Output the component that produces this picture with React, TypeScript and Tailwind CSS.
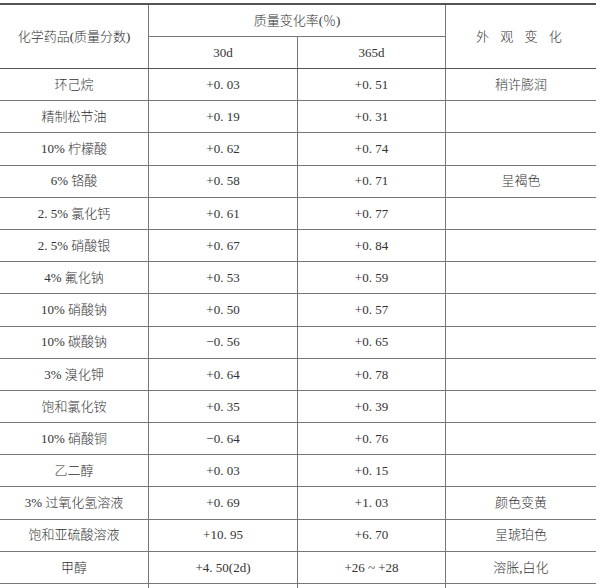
import React from 'react';

type Row = {
  name: string;
  d30: string;
  d365: string;
  change?: string;
};

const rows: Row[] = [
  { name: '环己烷', d30: '+0. 03', d365: '+0. 51', change: '稍许膨润' },
  { name: '精制松节油', d30: '+0. 19', d365: '+0. 31' },
  { name: '10% 柠檬酸', d30: '+0. 62', d365: '+0. 74' },
  { name: '6% 铬酸', d30: '+0. 58', d365: '+0. 71', change: '呈褐色' },
  { name: '2. 5% 氯化钙', d30: '+0. 61', d365: '+0. 77' },
  { name: '2. 5% 硝酸银', d30: '+0. 67', d365: '+0. 84' },
  { name: '4% 氟化钠', d30: '+0. 53', d365: '+0. 59' },
  { name: '10% 硝酸钠', d30: '+0. 50', d365: '+0. 57' },
  { name: '10% 碳酸钠', d30: '−0. 56', d365: '+0. 65' },
  { name: '3% 溴化钾', d30: '+0. 64', d365: '+0. 78' },
  { name: '饱和氯化铵', d30: '+0. 35', d365: '+0. 39' },
  { name: '10% 硝酸铜', d30: '−0. 64', d365: '+0. 76' },
  { name: '乙二醇', d30: '+0. 03', d365: '+0. 15' },
  { name: '3% 过氧化氢溶液', d30: '+0. 69', d365: '+1. 03', change: '颜色变黄' },
  { name: '饱和亚硫酸溶液', d30: '+10. 95', d365: '+6. 70', change: '呈琥珀色' },
  { name: '甲醇', d30: '+4. 50(2d)', d365: '+26 ~ +28', change: '溶胀,白化' },
];

const font = { fontFamily: '"Liberation Serif", "Noto Sans CJK SC", serif' };

export default function App() {
  return (
    <div className="w-[600px] h-[588px] overflow-hidden bg-white pt-[3px] text-[13px] font-light text-[#333]" style={font}>
      <div className="w-[596px] border-t-2 border-[#555]">
        {/* 表头 */}
        <div className="flex h-[64px] border-b border-[#555]">
          <div className="w-[149px] border-r border-[#777] flex items-center justify-center">
            化学药品(质量分数)
          </div>
          <div className="w-[297px] border-r border-[#777] flex flex-col">
            <div className="h-[32px] border-b border-[#777] flex items-center justify-center">
              质量变化率(％)
            </div>
            <div className="flex-1 flex">
              <div className="w-[149px] border-r border-[#777] flex items-center justify-center">30d</div>
              <div className="flex-1 flex items-center justify-center">365d</div>
            </div>
          </div>
          <div className="flex-1 flex items-center justify-center tracking-[4px]">外 观 变 化</div>
        </div>

        {rows.map((row, i) => (
          <div key={i} className="flex h-[32.2px] border-b border-[#777]">
            <div className="w-[149px] border-r border-[#777] flex items-center justify-center">{row.name}</div>
            <div className="w-[149px] border-r border-[#777] flex items-center justify-center">{row.d30}</div>
            <div className="w-[148px] border-r border-[#777] flex items-center justify-center">{row.d365}</div>
            <div className="flex-1 flex items-center justify-center">{row.change ?? ''}</div>
          </div>
        ))}

        {/* 下一行（截断） */}
        <div className="flex h-[32px]">
          <div className="w-[149px] border-r border-[#777]" />
          <div className="w-[149px] border-r border-[#777]" />
          <div className="w-[148px] border-r border-[#777]" />
          <div className="flex-1" />
        </div>
      </div>
    </div>
  );
}
